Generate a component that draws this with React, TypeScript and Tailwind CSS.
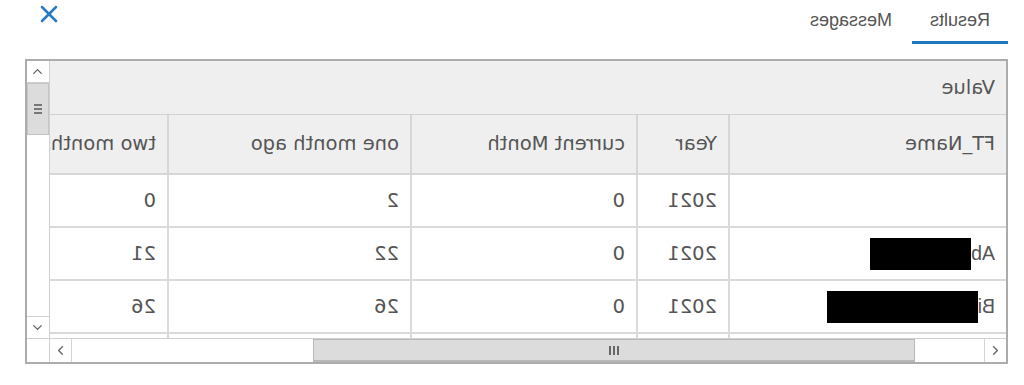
import { ChevronUp, ChevronDown, ChevronLeft, ChevronRight, X } from 'lucide-react'

const columns = [
  { label: 'FT_Name', width: 278 },
  { label: 'Year', width: 92 },
  { label: 'current Month', width: 226 },
  { label: 'one month ago', width: 243 },
  { label: 'two months ago', width: 160 },
]

const rows = [
  { name: '', redact: 0, year: '2021', cur: '0', one: '2', two: '0' },
  { name: 'Ab', redact: 101, year: '2021', cur: '0', one: '22', two: '21' },
  { name: 'Bi', redact: 151, year: '2021', cur: '0', one: '26', two: '26' },
  { name: '', redact: 0, year: '', cur: '', one: '', two: '' },
]

export default function App() {
  return (
    // the reference is a mirrored capture, so the whole page is flipped
    <div className="w-[1024px] h-[385px] bg-white overflow-hidden -scale-x-100 font-['DejaVu_Sans',sans-serif] text-[#555]">
      <div className="h-[59px] flex items-start justify-between pl-[16px] pr-[35px]">
        <div className="flex items-start font-['Liberation_Sans',Arial,sans-serif] text-[18px]">
          <div className="w-[96px] h-[44px] flex justify-center pt-[7px] border-b-[3px] border-[#1f77c0] text-[#555]">
            Results
          </div>
          <div className="px-[20px] pt-[7px] text-[#555]">Messages</div>
        </div>
        <X className="mt-[0px] w-[28px] h-[28px] text-[#2a7bc4]" strokeWidth={2.2} />
      </div>

      <div className="ml-[16px] w-[983px] h-[305px] border-2 border-[#acacac] flex flex-col">
        <div className="flex h-[277px]">
          <div className="flex-1 overflow-hidden">
            <div className="h-[54px] bg-[#efefef] border-b border-[#d2d2d2] flex items-center pl-[11px] text-[19.5px]">
              Value
            </div>
            <div className="flex h-[60px] bg-[#efefef] border-b-2 border-[#d6d6d6]">
              {columns.map((c) => (
                <div
                  key={c.label}
                  style={{ width: c.width }}
                  className="shrink-0 flex items-center pl-[11px] border-r-2 border-[#d6d6d6] text-[19.5px] whitespace-nowrap overflow-hidden"
                >
                  {c.label}
                </div>
              ))}
            </div>
            {rows.map((r, i) => (
              <div key={i} className="flex h-[53px] border-b-2 border-[#dadada]">
                <Cell width={278}>
                  <span className="font-['Liberation_Sans',Arial,sans-serif]">{r.name}</span>
                  {r.redact > 0 && <span className="inline-block bg-black h-[32px]" style={{ width: r.redact }} />}
                </Cell>
                <Cell width={92}>{r.year}</Cell>
                <Cell width={226}>{r.cur}</Cell>
                <Cell width={243}>{r.one}</Cell>
                <Cell width={160}>{r.two}</Cell>
              </div>
            ))}
          </div>

          <div className="w-[23px] shrink-0 border-l border-[#d0d0d0] flex flex-col">
            <div className="h-[22px] border-b border-[#cfcfcf] flex items-center justify-center">
              <ChevronUp className="w-[15px] h-[15px] text-[#666]" strokeWidth={2.2} />
            </div>
            <div className="h-[52px] bg-[#dcdcdc] border border-[#c4c4c4] flex items-center justify-center">
              <div className="flex flex-col gap-[2px]">
                <span className="block w-[8px] h-[2px] bg-[#777]" />
                <span className="block w-[8px] h-[2px] bg-[#777]" />
                <span className="block w-[8px] h-[2px] bg-[#777]" />
              </div>
            </div>
            <div className="flex-1" />
            <div className="h-[22px] border-t border-[#cfcfcf] flex items-center justify-center">
              <ChevronDown className="w-[15px] h-[15px] text-[#666]" strokeWidth={2.2} />
            </div>
          </div>
        </div>

        <div className="flex h-[24px] border-t border-[#d0d0d0]">
          <div className="flex-1 flex">
            <div className="w-[22px] border-r border-[#d4d4d4] flex items-center justify-center">
              <ChevronLeft className="w-[15px] h-[15px] text-[#666]" strokeWidth={2.2} />
            </div>
            <div className="w-[69px]" />
            <div className="w-[602px] bg-[#dcdcdc] border border-b-2 border-[#b8b8b8] flex items-center justify-center">
              <div className="flex gap-[2px]">
                <span className="block w-[2px] h-[9px] bg-[#666]" />
                <span className="block w-[2px] h-[9px] bg-[#666]" />
                <span className="block w-[2px] h-[9px] bg-[#666]" />
              </div>
            </div>
            <div className="flex-1" />
            <div className="w-[22px] border-l border-[#d4d4d4] flex items-center justify-center">
              <ChevronRight className="w-[15px] h-[15px] text-[#666]" strokeWidth={2.2} />
            </div>
          </div>
          <div className="w-[23px] border-l border-[#d0d0d0]" />
        </div>
      </div>
    </div>
  )
}

function Cell({ width, children }: { width: number; children?: React.ReactNode }) {
  return (
    <div
      style={{ width }}
      className="shrink-0 flex items-center pl-[11px] border-r-2 border-[#dadada] text-[19.5px] whitespace-nowrap overflow-hidden"
    >
      {children}
    </div>
  )
}
